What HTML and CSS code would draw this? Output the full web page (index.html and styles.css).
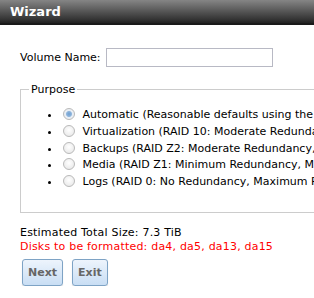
FILE: index.html
```html
<!DOCTYPE html>
<html lang="en">
<head>
  <meta charset="UTF-8">
  <title>Wizard</title>
  <link rel="stylesheet" href="styles.css">
</head>
<body>
  <div class="wizard">
    <div class="wizard-title">Wizard</div>
    <form class="wizard-body">
      <div class="form-row">
        <label for="volname">Volume Name:</label>
        <input type="text" id="volname" name="volname">
      </div>

      <fieldset class="purpose">
        <legend>Purpose</legend>
        <ul>
          <li><input type="radio" name="purpose" checked> Automatic (Reasonable defaults using the available disks)</li>
          <li><input type="radio" name="purpose"> Virtualization (RAID 10: Moderate Redundancy, Maximum Performance)</li>
          <li><input type="radio" name="purpose"> Backups (RAID Z2: Moderate Redundancy, Moderate Performance)</li>
          <li><input type="radio" name="purpose"> Media (RAID Z1: Minimum Redundancy, Moderate Performance)</li>
          <li><input type="radio" name="purpose"> Logs (RAID 0: No Redundancy, Maximum Performance)</li>
        </ul>
      </fieldset>

      <div class="summary">
        <div>Estimated Total Size: 7.3 TiB</div>
        <div class="warn">Disks to be formatted: da4, da5, da13, da15</div>
      </div>

      <div class="actions">
        <button type="button">Next</button>
        <button type="button">Exit</button>
      </div>
    </form>
  </div>
</body>
</html>
```

FILE: styles.css
```css
html, body {
  margin: 0;
  padding: 0;
  overflow: hidden;
  background: #fff;
}

body {
  font-family: "DejaVu Sans", Verdana, sans-serif;
  font-size: 11px;
  color: #000;
}

.wizard-title {
  height: 23px;
  line-height: 23px;
  padding-left: 10px;
  color: #fff;
  font-weight: bold;
  font-size: 13px;
  background: linear-gradient(to bottom, #858585, #333 85%, #222);
  border-bottom: 2px solid #1a1a1a;
}

.wizard-body {
  padding: 23px 0 0 20px;
  width: 420px;
}

.form-row {
  display: flex;
  align-items: center;
}

.form-row label {
  margin-right: 5px;
}

.form-row input {
  width: 161px;
  height: 15px;
  padding: 1px 2px;
  border: 1px solid #b8b9c4;
  font: inherit;
}

.purpose {
  margin: 16px 0 0 0;
  padding: 2px 0 21px 0;
  border: 1px solid #ccc;
  white-space: nowrap;
}

.purpose legend {
  margin-left: 8px;
  padding: 0 2px;
}

.purpose ul {
  margin: 9px 0 0 0;
  padding-left: 40px;
  list-style: disc;
}

.purpose li {
  line-height: 16.75px;
}

.purpose input[type="radio"] {
  -webkit-appearance: none;
  appearance: none;
  width: 12px;
  height: 12px;
  margin: 0 4px 0 2px;
  vertical-align: -2px;
  border: 1px solid #b9b9b9;
  border-radius: 50%;
  background: radial-gradient(circle at 50% 40%, #fff, #e4e4e4);
}

.purpose input[type="radio"]:checked {
  background: radial-gradient(circle, #6f9fd0 0, #8fb5dc 2.5px, #e8eef5 3.5px, #f2f2f2 100%);
}

.summary {
  margin-top: 13px;
  line-height: 14px;
  letter-spacing: 0.2px;
}

.warn {
  color: #f00;
}

.actions {
  margin-top: 5px;
  display: flex;
  gap: 9px;
  padding-left: 2px;
}

.actions button {
  height: 27px;
  padding: 0 5px;
  font: bold 11px "DejaVu Sans", Verdana, sans-serif;
  color: #666;
  border: 1px solid #7ea3c5;
  border-radius: 3px;
  background: linear-gradient(to bottom, #edf4fc, #c9def4);
  box-shadow: 0 1px 1px rgba(0, 0, 0, 0.15);
}
```
